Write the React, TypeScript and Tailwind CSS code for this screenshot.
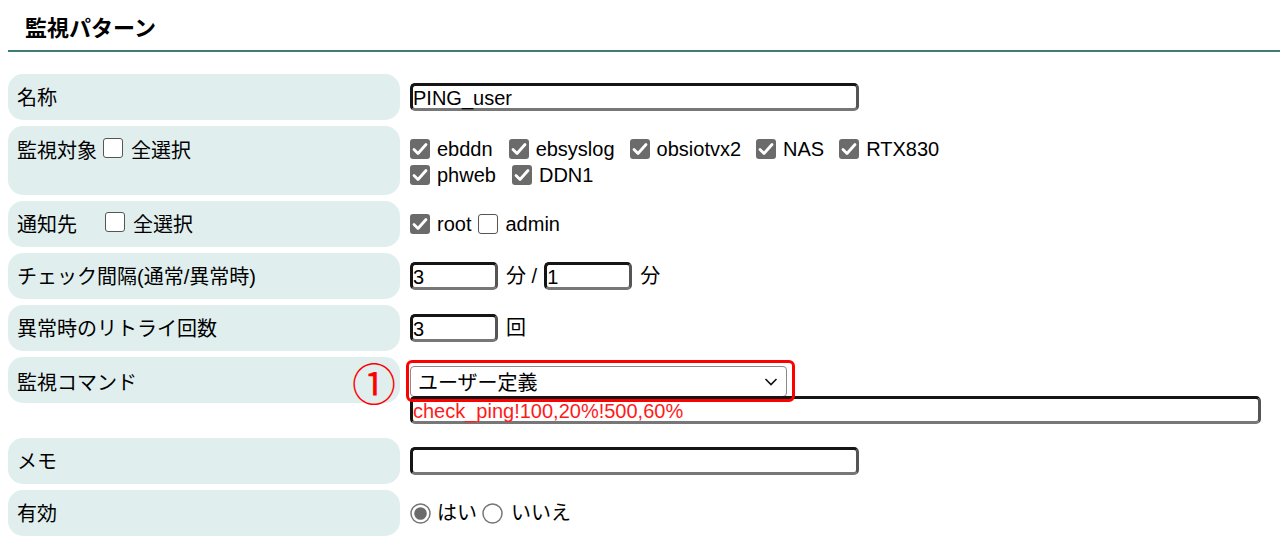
import React from "react";

const FONT = { fontFamily: '"Liberation Sans", Arial, "Noto Sans CJK JP", sans-serif' };

function Check({ checked = true }: { checked?: boolean }) {
  if (checked) {
    return (
      <span className="inline-flex w-[20px] h-[20px] shrink-0 items-center justify-center rounded-[3px] bg-[#6b6b6b]">
        <svg width="20" height="20" viewBox="0 0 20 20">
          <path d="M4 10.5 L8 14.5 L16 5.5" fill="none" stroke="#fff" strokeWidth="2.8" strokeLinecap="round" strokeLinejoin="round" />
        </svg>
      </span>
    );
  }
  return <span className="inline-block w-[20px] h-[20px] shrink-0 rounded-[3px] border-[1.5px] border-[#555] bg-white" />;
}

function Radio({ checked }: { checked?: boolean }) {
  return (
    <svg width="21" height="21" viewBox="0 0 21 21" className="shrink-0">
      <circle cx="10.5" cy="10.5" r="9.5" fill="#fff" stroke="#767676" strokeWidth="1.5" />
      {checked && <circle cx="10.5" cy="10.5" r="6.3" fill="#6b6b6b" />}
    </svg>
  );
}

function Input({ w, value = "", red = false }: { w: string; value?: string; red?: boolean }) {
  return (
    <div
      className={`${w} h-[28px] rounded-[5px] border-[3px] border-t-[#151515] border-l-[#151515] border-b-[#777] border-r-[#555] bg-white flex items-center text-[20px] leading-[22px] whitespace-nowrap ${red ? "text-[#ff1a1a]" : "text-black"}`}
    >
      <span className="relative top-[1px]">{value}</span>
    </div>
  );
}

function Label({ children, h, pt = "pt-[11px]" }: { children: React.ReactNode; h?: string; pt?: string }) {
  return (
    <div className={`w-[392px] shrink-0 rounded-[15px] bg-[#e0eeee] pl-[9px] ${pt} leading-[26px] ${h ?? ""}`}>
      <div className="flex items-center">{children}</div>
    </div>
  );
}

export default function App() {
  return (
    <div className="w-[1280px] h-[545px] bg-white text-[20px] text-black overflow-hidden" style={FONT}>
      <div className="pl-[8px]">
        <div className="h-[50px] flex items-center pl-[17px] text-[22px] font-bold pt-[6px]">監視パターン</div>
        <div className="h-[2px] bg-[#3f7b77]" />
        <div className="flex flex-col gap-[6px] mt-[22px]">
          {/* 名称 */}
          <div className="flex gap-[10px]">
            <Label h="h-[46px]">名称</Label>
            <div className="flex items-center h-[46px]">
              <Input w="w-[449px]" value="PING_user" />
            </div>
          </div>
          {/* 監視対象 */}
          <div className="flex gap-[10px]">
            <Label pt="pt-[12px]">
              <span>監視対象</span>
              <span className="ml-[6px] mr-[8px]"><Check checked={false} /></span>
              <span>全選択</span>
            </Label>
            <div className="pt-[10px] pb-[7px] leading-[26px]">
              <div className="flex items-center">
                <Check /><span className="ml-[7px] mr-[16px]">ebddn</span>
                <Check /><span className="ml-[7px] mr-[15px]">ebsyslog</span>
                <Check /><span className="ml-[7px] mr-[15px]">obsiotvx2</span>
                <Check /><span className="ml-[7px] mr-[15px]">NAS</span>
                <Check /><span className="ml-[7px] mr-[15px]">RTX830</span>
              </div>
              <div className="flex items-center">
                <Check /><span className="ml-[7px] mr-[16px]">phweb</span>
                <Check /><span className="ml-[7px] mr-[16px]">DDN1</span>
              </div>
            </div>
          </div>
          {/* 通知先 */}
          <div className="flex gap-[10px]">
            <Label h="h-[46px]">
              <span>通知先</span>
              <span className="ml-[28px] mr-[8px]"><Check checked={false} /></span>
              <span>全選択</span>
            </Label>
            <div className="flex items-center h-[46px]">
              <Check /><span className="ml-[7px] mr-[7px]">root</span>
              <Check checked={false} /><span className="ml-[7px]">admin</span>
            </div>
          </div>
          {/* チェック間隔 */}
          <div className="flex gap-[10px]">
            <Label h="h-[46px]">チェック間隔(通常/異常時)</Label>
            <div className="flex items-center h-[46px]">
              <Input w="w-[88px]" value="3" />
              <span className="ml-[8px] mr-[7px]">分 /</span>
              <Input w="w-[88px]" value="1" />
              <span className="ml-[8px]">分</span>
            </div>
          </div>
          {/* リトライ */}
          <div className="flex gap-[10px]">
            <Label h="h-[46px]">異常時のリトライ回数</Label>
            <div className="flex items-center h-[46px]">
              <Input w="w-[88px]" value="3" />
              <span className="ml-[8px]">回</span>
            </div>
          </div>
          {/* 監視コマンド */}
          <div className="flex gap-[10px] items-start">
            <Label h="h-[46px]" pt="pt-[13px]">監視コマンド</Label>
            <div className="relative pt-[9px] pb-[8px]">
              <div className="w-[377px] h-[31px] rounded-[4px] border border-[#8a8a8a] bg-white flex items-center justify-between pl-[7px] pr-[8px]">
                <span className="relative top-[1px]">ユーザー定義</span>
                <svg width="14" height="10" viewBox="0 0 14 10">
                  <path d="M1.5 2 L7 7.5 L12.5 2" fill="none" stroke="#111" strokeWidth="1.6" />
                </svg>
              </div>
              <div className="relative -mt-[1px]">
                <Input w="w-[851px]" value="check_ping!100,20%!500,60%" red />
              </div>
              <div className="absolute left-[-4px] top-[3px] w-[389px] h-[42px] rounded-[6px] border-[3px] border-[#ff0000]" />
              <div className="absolute left-[-58px] top-[4px] h-[42px] flex items-center text-[44px] leading-none text-[#ff0000]" style={{ fontFamily: '"Noto Sans CJK JP", sans-serif' }}>
                ①
              </div>
            </div>
          </div>
          {/* メモ */}
          <div className="flex gap-[10px]">
            <Label h="h-[46px]">メモ</Label>
            <div className="flex items-center h-[46px]">
              <Input w="w-[449px]" />
            </div>
          </div>
          {/* 有効 */}
          <div className="flex gap-[10px]">
            <Label h="h-[46px]">有効</Label>
            <div className="flex items-center h-[46px]">
              <Radio checked />
              <span className="ml-[6px] mr-[5px]">はい</span>
              <Radio />
              <span className="ml-[8px]">いいえ</span>
            </div>
          </div>
        </div>
      </div>
    </div>
  );
}
